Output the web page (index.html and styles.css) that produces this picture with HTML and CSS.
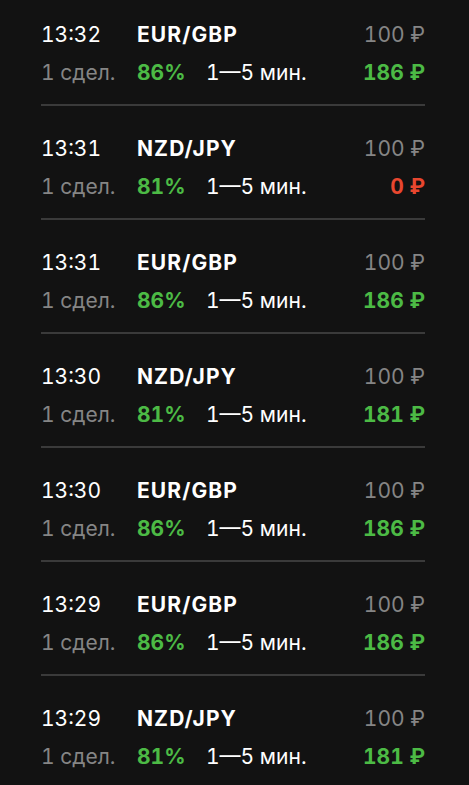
FILE: index.html
```html
<!DOCTYPE html>
<html lang="ru">
<head>
<meta charset="utf-8">
<link rel="stylesheet" href="styles.css">
</head>
<body>
<div class="list">
  <div class="row">
    <span class="time">13:32</span><span class="pair">EUR/GBP</span><span class="stake">100 ₽</span>
    <span class="count">1 сдел.</span><span class="pct">86%</span><span class="dur">1—5 мин.</span><span class="res win">186 ₽</span>
  </div>
  <div class="row">
    <span class="time">13:31</span><span class="pair">NZD/JPY</span><span class="stake">100 ₽</span>
    <span class="count">1 сдел.</span><span class="pct">81%</span><span class="dur">1—5 мин.</span><span class="res loss">0 ₽</span>
  </div>
  <div class="row">
    <span class="time">13:31</span><span class="pair">EUR/GBP</span><span class="stake">100 ₽</span>
    <span class="count">1 сдел.</span><span class="pct">86%</span><span class="dur">1—5 мин.</span><span class="res win">186 ₽</span>
  </div>
  <div class="row">
    <span class="time">13:30</span><span class="pair">NZD/JPY</span><span class="stake">100 ₽</span>
    <span class="count">1 сдел.</span><span class="pct">81%</span><span class="dur">1—5 мин.</span><span class="res win">181 ₽</span>
  </div>
  <div class="row">
    <span class="time">13:30</span><span class="pair">EUR/GBP</span><span class="stake">100 ₽</span>
    <span class="count">1 сдел.</span><span class="pct">86%</span><span class="dur">1—5 мин.</span><span class="res win">186 ₽</span>
  </div>
  <div class="row">
    <span class="time">13:29</span><span class="pair">EUR/GBP</span><span class="stake">100 ₽</span>
    <span class="count">1 сдел.</span><span class="pct">86%</span><span class="dur">1—5 мин.</span><span class="res win">186 ₽</span>
  </div>
  <div class="row">
    <span class="time">13:29</span><span class="pair">NZD/JPY</span><span class="stake">100 ₽</span>
    <span class="count">1 сдел.</span><span class="pct">81%</span><span class="dur">1—5 мин.</span><span class="res win">181 ₽</span>
  </div>
</div>
</body>
</html>
```
FILE: styles.css
```css
html, body {
  margin: 0;
  padding: 0;
  background: #121212;
}
body {
  font-family: Inter, "Noto Sans", sans-serif;
  font-size: 21px;
  line-height: 24px;
  color: #ffffff;
  font-variant-numeric: tabular-nums;
  height: 785px;
  overflow: hidden;
}
.list {
  padding: 0 44px 0 41px;
}
.row {
  display: grid;
  grid-template-columns: 96px 69px 1fr auto;
  row-gap: 14px;
  padding: 31px 0 19px;
  border-bottom: 2px solid #3a3a3a;
}
.row:first-child {
  padding-top: 23px;
}
.time { grid-column: 1; }
.pair { grid-column: 2 / 4; font-weight: 700; letter-spacing: 1.1px; }
.stake { grid-column: 4; text-align: right; color: #858585; }
.count { grid-column: 1; color: #858585; }
.pct { grid-column: 2; color: #4cba45; font-weight: 700; }
.dur { grid-column: 3; }
.res { grid-column: 4; text-align: right; font-weight: 700; }
.win { color: #4cba45; }
.loss { color: #e8472f; }
```
